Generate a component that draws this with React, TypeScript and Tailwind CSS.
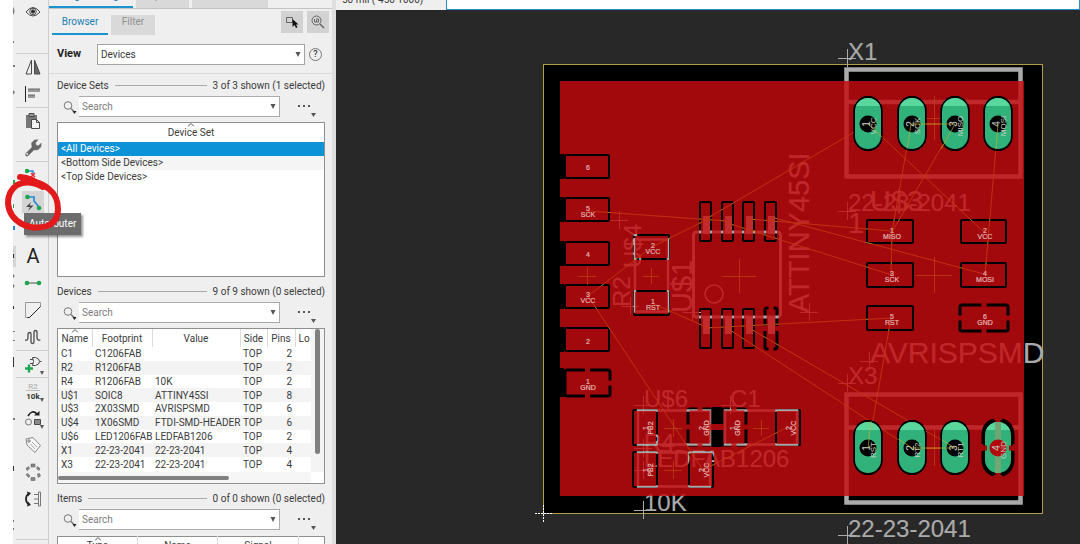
import React from "react";

const ink = "#4a4a4a";

function ToolButton({ label, children, active = false, menu = false }: { label: string; children?: React.ReactNode; active?: boolean; menu?: boolean }) {
  return (
    <button aria-label={label} className="relative flex h-[27px] w-full items-center justify-center pl-0.5">
      <span className={active ? "flex size-[22px] items-center justify-center bg-[#d4d4d4]" : "flex size-[22px] items-center justify-center"}>
        <svg viewBox="0 0 20 20" className="size-5" fill="none" stroke={ink} strokeWidth="1">
          {children}
        </svg>
      </span>
      {menu && (
        <svg viewBox="0 0 4 4" className="absolute right-1 bottom-0.5 size-1">
          <path d="M0 0h4L2 4z" fill="#555" />
        </svg>
      )}
    </button>
  );
}

function ToolGroup({ children }: { children: React.ReactNode }) {
  return <div className="shadow-[inset_0_1px_#cfcfcf]">{children}</div>;
}

function NeighbourColumn() {
  return (
    <svg viewBox="0 0 3 544" preserveAspectRatio="xMinYMin slice" className="h-full w-[3px] shrink-0">
      <g fill="#777">
        <path d="M0 7q3 4 0 8zM0 65h2v2H0zM0 90l2 2-2 3zM0 331h2v1H0zM0 340h2v1H0zM0 418h2v2H0z" />
        <path d="M0 41h1v2H0zM0 274q3 2 0 4zM0 284q3 2 0 4zM0 520h1v2H0zM0 528h1v2H0z" />
      </g>
      <path d="M0 246h3v21H0z" fill="#d4d4d4" />
      <path d="M0 254h1v4H0zM0 306h1v3H0zM0 357h1v10H0zM0 466h1v5H0z" fill="#333" />
      <path d="M0 180h2v4H0zM0 204h1v4H0z" fill="#1ca64c" />
      <path d="M0 226h2v4H0z" fill="#1b87c9" />
    </svg>
  );
}

function Toolbar() {
  return (
    <nav aria-label="Board tools" className="flex w-9 shrink-0 border-r border-[#cdcdcd] bg-[#efefef]">
      <NeighbourColumn />
      <div className="min-w-0 flex-1">
        <div className="h-[53px] pt-px">
          <button aria-label="Show" className="flex h-[22px] w-full items-center justify-center pl-0.5">
            <svg viewBox="0 0 16 14" className="h-3.5 w-4" fill="none" stroke={ink}>
              <path d="M1 7Q8-2 15 7 8 15 1 7z" />
              <circle cx="8" cy="6.500" r="3.300" />
              <circle cx="8" cy="6.500" r="1.700" fill="#222" />
            </svg>
          </button>
        </div>
        <ToolGroup>
          <ToolButton label="Mirror">
            <path d="M8.500 3v14H3z" />
            <path d="M11.500 3v14H17z" fill="#666" />
          </ToolButton>
          <ToolButton label="Align">
            <path d="M2.500 2v16" stroke="#222" />
            <path d="M5 6.500h12M5 12.500h7" stroke="#999" strokeWidth="3" />
            <path d="M5 5h12M5 11h7" stroke="#666" />
          </ToolButton>
        </ToolGroup>
        <ToolGroup>
          <ToolButton label="Paste">
            <path d="M3 4h11v13H3z" fill="#777" stroke="none" />
            <path d="M6 2.500h5v3H6z" fill="#999" />
            <path d="M8.500 8.500h5l3 3v6h-8z" fill="#f4f4f4" />
            <path d="M13.500 8.500v3h3" />
          </ToolButton>
          <ToolButton label="Change">
            <path d="M4 16.500l6.500-6.500" stroke="#666" strokeWidth="3.600" strokeLinecap="round" />
            <path d="M9 9l-.5-4 3-3 3.500-.3-2.500 3 .5 2.500 2.500.5 2.700-2.500-.2 3.500-3 3-4 .3z" fill="#666" stroke="#666" strokeWidth=".5" />
            <circle cx="4.200" cy="16" r=".9" fill="#eee" stroke="none" />
          </ToolButton>
        </ToolGroup>
        <ToolGroup>
          <ToolButton label="Ripup">
            <path d="M4 6h6v4" stroke="#2389d8" strokeWidth="1.500" />
            <circle cx="4" cy="6" r="2.200" fill="#16a84a" stroke="none" />
            <path d="M8 8l4 4m0-4l-4 4" stroke="#e03131" strokeWidth="1.500" />
          </ToolButton>
          <ToolButton label="Autorouter" active>
            <path d="M4 5h7v4l5 6" stroke="#2389d8" strokeWidth="1.700" />
            <circle cx="4.500" cy="5" r="2.300" fill="#16a84a" stroke="none" />
            <circle cx="16" cy="16" r="2.300" fill="#16a84a" stroke="none" />
            <path d="M8 10l-5 5h4l-2 4 5.500-5.500h-4z" fill="#444" stroke="none" />
          </ToolButton>
          <ToolButton label="Polygon">
            <path d="M3.500 7v8.500h15V12" />
          </ToolButton>
          <ToolButton label="Text">
            <text x="10" y="17" textAnchor="middle" fontSize="20" fill="#222" stroke="none" className="font-[Roboto,sans-serif]">A</text>
          </ToolButton>
          <ToolButton label="Signal">
            <path d="M4 10h12" stroke="#555" />
            <circle cx="4" cy="10" r="2.300" fill="#16a84a" stroke="none" />
            <circle cx="16" cy="10" r="2.300" fill="#16a84a" stroke="none" />
          </ToolButton>
          <ToolButton label="Miter">
            <path d="M2.500 17.500v-15h15v4l-11 11z" stroke="#999" />
            <path d="M17.500 6.500l-11 11h-2" stroke="#222" />
          </ToolButton>
          <ToolButton label="Meander">
            <path d="M2 13q3 1 3-3V7q0-1.500 1.500-1.500T8 7v8q0 1.500 1.500 1.500T11 15V5q0-1.500 1.500-1.500T14 5v5q0 4 3.500 3" strokeWidth="1.300" />
          </ToolButton>
        </ToolGroup>
        <ToolGroup>
          <ToolButton label="Add part" menu>
            <path d="M9.500 3.500h3q4 1 4 4t-4 4h-3q2-4 0-8zM7 5.500h3M7 9.500h3M16.500 7.500h2" />
            <path d="M6 10.500v8M2 14.500h8" stroke="#1fa651" strokeWidth="2.400" />
          </ToolButton>
        </ToolGroup>
        <ToolGroup>
          <ToolButton label="Value" menu>
            <text x="10" y="8" textAnchor="middle" fontSize="8" fill="#aaa" stroke="none">R2</text>
            <path d="M3 9.500h14" stroke="#bbb" />
            <text x="10" y="18" textAnchor="middle" fontSize="8" fill="#333" stroke="none" className="font-bold">10k</text>
          </ToolButton>
          <ToolButton label="Replace" menu>
            <path d="M5 8q4-7 9-2" stroke="#222" strokeWidth="1.600" />
            <path d="M11 7.500h5.500V3z" fill="#222" stroke="none" />
            <circle cx="5.500" cy="14" r="3" stroke="#777" />
            <path d="M11.500 11.500h6v5h-6z" fill="#8a8a8a" />
          </ToolButton>
          <ToolButton label="Name">
            <path d="M3 4l7-1.500 7.500 8-5.500 7L4 10z" stroke="#888" fill="#f7f7f7" />
            <circle cx="6" cy="6" r="1.200" stroke="#777" />
            <path d="M9 7l5 5M7.500 9l4.500 5" stroke="#aaa" />
          </ToolButton>
          <ToolButton label="Rotate array">
            <g fill="#888" stroke="#666" strokeWidth=".6">
              <path d="M8 2h4v3H8zM8 15.500h4v3H8zM14.500 4.500l2.500 2-1 2-2.500-2zM14.500 12l2-.5 1 2.500-2.500 1.500zM5.500 4.500l1 2-2.500 2-1-2zM3 12.500l2-1 2 2.500-1.500 1.500z" />
            </g>
          </ToolButton>
          <ToolButton label="Pin swap">
            <path d="M6 5q-3 1-3 5t3 5" stroke="#222" strokeWidth="1.800" />
            <path d="M4 2.500l4 1.500-3 3.500zM4 17.500l4-1.500-3-3.500z" fill="#222" stroke="none" />
            <path d="M15.500 3h2v14h-2zM11 5.500h4M11 10h4M11 14.500h4" stroke="#777" />
          </ToolButton>
          <div className="h-[27px]" />
        </ToolGroup>
        <ToolGroup>
          <div className="h-[27px]" />
        </ToolGroup>
      </div>
    </nav>
  );
}

function Arrow({ className = "" }: { className?: string }) {
  return (
    <svg viewBox="0 0 6 5" className={"h-[5px] w-1.5 " + className}>
      <path d="M.5 0h5L3 5z" fill="#555" />
    </svg>
  );
}

function SectionTitle({ id, title, status }: { id: string; title: string; status: string }) {
  return (
    <div className="flex h-4 items-center gap-1.5">
      <label htmlFor={id}>{title}</label>
      <span className="h-px flex-1 bg-[#a9a9a9]" />
      <span>{status}</span>
    </div>
  );
}

function SearchRow({ id }: { id: string }) {
  return (
    <div className="mt-[3px] flex h-[21px] items-center">
      <button aria-label="Search options" className="flex w-[22px] justify-end pr-0.5">
        <svg viewBox="0 0 14 14" className="size-3.5" fill="none" stroke="#777">
          <circle cx="5" cy="5.500" r="3.800" />
          <path d="M8 8.500l3 3" strokeWidth="1.400" />
          <path d="M9.500 11h4l-2 3z" fill="#222" stroke="none" />
        </svg>
      </button>
      <div className="flex h-full flex-1 items-center border border-l-0 border-[#ababab] bg-white pr-[3px]">
        <input id={id} type="text" placeholder="Search" className="min-w-0 flex-1 bg-transparent pl-[3px] text-[10px] outline-none placeholder:text-[#7d7d7d]" />
        <Arrow />
      </div>
      <button aria-label="More options" className="ml-[18px] flex h-full w-[27px] items-center">
        <svg viewBox="0 0 18 21" className="h-[21px] w-[18px]" fill="#555">
          <path d="M0 9h2v2H0zM5 9h2v2H5zM10 9h2v2h-2zM13 17h5l-2.500 4z" />
        </svg>
      </button>
    </div>
  );
}

function SortMark() {
  return (
    <svg viewBox="0 0 7 4" className="absolute top-0 left-1/2 h-1 w-[7px] -translate-x-1/2" fill="none" stroke="#555">
      <path d="M.5 3.500l3-3 3 3" />
    </svg>
  );
}

const devices: string[][] = [
  ["C1", "C1206FAB", "", "TOP", "2"],
  ["R2", "R1206FAB", "", "TOP", "2"],
  ["R4", "R1206FAB", "10K", "TOP", "2"],
  ["U$1", "SOIC8", "ATTINY45SI", "TOP", "8"],
  ["U$3", "2X03SMD", "AVRISPSMD", "TOP", "6"],
  ["U$4", "1X06SMD", "FTDI-SMD-HEADER", "TOP", "6"],
  ["U$6", "LED1206FAB", "LEDFAB1206", "TOP", "2"],
  ["X1", "22-23-2041", "22-23-2041", "TOP", "4"],
  ["X3", "22-23-2041", "22-23-2041", "TOP", "4"],
];

function DeviceTable() {
  return (
    <div className="mt-[5px] flex h-[156px] flex-col border border-[#8f8f8f] bg-white">
      <div className="flex min-h-0 flex-1">
        <div className="min-w-0 flex-1 overflow-hidden">
          <table className="h-[142px] w-full table-fixed border-collapse text-left whitespace-nowrap">
            <colgroup>
              <col className="w-[34px]" />
              <col className="w-[60px]" />
              <col className="w-[88px]" />
              <col className="w-[27px]" />
              <col className="w-[28px]" />
              <col />
            </colgroup>
            <thead>
              <tr className="h-[18px] text-center">
                <th className="relative border-r border-[#dcdcdc] font-normal">Name<SortMark /></th>
                <th className="border-r border-[#dcdcdc] font-normal">Footprint</th>
                <th className="border-r border-[#dcdcdc] font-normal">Value</th>
                <th className="border-r border-[#dcdcdc] font-normal">Side</th>
                <th className="border-r border-[#dcdcdc] font-normal">Pins</th>
                <th className="pl-[3px] text-left font-normal">Lo</th>
              </tr>
            </thead>
            <tbody className="leading-[13px]">
              {devices.map((d) => (
                <tr key={d[0]} className="even:bg-[#f4f4f4]">
                  <td className="pl-[3px]">{d[0]}</td>
                  <td className="pl-[3px]">{d[1]}</td>
                  <td className="pl-[3px]">{d[2]}</td>
                  <td className="pl-[3px]">{d[3]}</td>
                  <td className="pr-[3px] text-right">{d[4]}</td>
                  <td />
                </tr>
              ))}
            </tbody>
          </table>
        </div>
        <div className="w-[13px] bg-[#f4f4f4] pl-1">
          <div className="h-[125px] w-[5px] rounded-full bg-[#808080]" />
        </div>
      </div>
      <div className="mr-[13px] flex h-[11px] items-center bg-[#f6f6f6]">
        <div className="h-1 w-[171px] rounded-full bg-[#808080]" />
      </div>
    </div>
  );
}

function SidePanel() {
  return (
    <aside className="flex w-[283px] shrink-0 flex-col overflow-hidden bg-[#efefef] text-[10px] text-[#3c3c3c]">
      <div className="flex h-[9px] shrink-0 items-end gap-[3px] overflow-hidden border-b border-[#c4c4c4]">
        <button className="flex h-6 w-[84px] items-start justify-center border-b-2 border-[#1b93cf] pt-1 leading-4 text-[#1b7fb5]">Design Manager</button>
        <button className="flex h-6 w-[53px] items-start justify-center bg-[#d9d9d9] pt-1 leading-4 text-[#888]">Inspector</button>
        <button className="flex h-6 w-[76px] items-start justify-center bg-[#d9d9d9] leading-3 text-[#888]">Selection Filter</button>
      </div>
      <div className="flex h-[26px] shrink-0 items-end gap-[3px] pr-[3px] pl-[3px]">
        <button className="h-6 w-14 border-b-2 border-[#1b93cf] pb-px text-[#1b7fb5]">Browser</button>
        <button className="h-5 w-11 bg-[#d9d9d9] pb-1.5 leading-[14px] text-[#909090]">Filter</button>
        <div className="mb-0.5 ml-auto flex gap-1">
          <button aria-label="Select in board" className="flex size-[22px] items-center justify-center bg-[#d2d2d2]">
            <svg viewBox="0 0 16 16" className="size-4" fill="none">
              <path d="M2.500 3.500h6v5h-6z" stroke="#666" />
              <path d="M8.500 5v8l2-2 1.500 3 1.500-.7-1.500-2.800h2.500z" fill="#111" />
            </svg>
          </button>
          <button aria-label="Zoom to selection" className="flex size-[22px] items-center justify-center bg-[#d2d2d2]">
            <svg viewBox="0 0 16 16" className="size-4" fill="none" stroke="#666">
              <circle cx="6.500" cy="6.500" r="4.500" />
              <path d="M10 10l4 4" strokeWidth="1.600" />
              <path d="M4.500 5v3h1.500m0-3h2.500v3H6.500v-2" />
            </svg>
          </button>
        </div>
      </div>

      <div className="mt-[9px] flex h-[21px] shrink-0 items-center pr-2.5 pl-2">
        <label htmlFor="view" className="w-10 text-[11px] font-bold text-[#222]">View</label>
        <div className="relative h-full flex-1">
          <select id="view" defaultValue="Devices" className="h-full w-full appearance-none border border-[#a3a3a3] bg-white pl-[3px] outline-none">
            <option>Devices</option>
          </select>
          <Arrow className="pointer-events-none absolute top-2 right-1" />
        </div>
        <button aria-label="Help" className="ml-1 flex size-[13px] items-center justify-center rounded-full border border-[#777] text-[9px] leading-none font-medium">?</button>
      </div>

      <div className="mt-2 flex flex-col border-t border-[#d9d9d9] pt-[3px] pr-[7px] pl-2">
        <section>
          <SectionTitle id="search-sets" title="Device Sets" status="3 of 3 shown (1 selected)" />
          <SearchRow id="search-sets" />
          <div className="mt-[5px] h-[155px] border border-[#8f8f8f] bg-white">
            <div className="relative h-[19px] pt-0.5 text-center leading-4">
              Device Set
              <SortMark />
            </div>
            <ul className="leading-[14px]">
              <li className="h-3.5 bg-[#0c92d6] pl-[3px] text-white">&lt;All Devices&gt;</li>
              <li className="h-3.5 bg-[#f5f5f5] pl-[3px]">&lt;Bottom Side Devices&gt;</li>
              <li className="h-3.5 pl-[3px]">&lt;Top Side Devices&gt;</li>
            </ul>
          </div>
        </section>
        <section className="mt-1.5">
          <SectionTitle id="search-devices" title="Devices" status="9 of 9 shown (0 selected)" />
          <SearchRow id="search-devices" />
          <DeviceTable />
        </section>
        <section className="mt-1.5">
          <SectionTitle id="search-items" title="Items" status="0 of 0 shown (0 selected)" />
          <SearchRow id="search-items" />
          <table className="mt-1.5 w-full table-fixed border border-[#8f8f8f] bg-white">
            <thead>
              <tr className="h-[18px]">
                <th className="relative w-[80px] border-r border-[#dcdcdc] pt-px leading-4 font-normal">Type<SortMark /></th>
                <th className="w-[80px] border-r border-[#dcdcdc] pt-px leading-4 font-normal">Name</th>
                <th className="w-[81px] border-r border-[#dcdcdc] pt-px leading-4 font-normal">Signal</th>
                <th />
              </tr>
            </thead>
            <tbody><tr><td className="h-10" /></tr></tbody>
          </table>
        </section>
      </div>
    </aside>
  );
}

type Box = [number, number, number, number];

const gaps: Box[] = [
  [565, 155, 44, 23], [565, 198, 44, 23], [565, 242, 44, 23], [565, 285, 44, 23], [565, 328, 44, 23],
  [634, 235, 35, 24], [634, 291, 35, 24],
  [700, 202, 11, 39], [722, 202, 11, 39], [743, 202, 11, 39], [765, 202, 11, 39],
  [700, 309, 11, 39], [722, 309, 11, 39], [743, 309, 11, 39],
  [867, 220, 46, 23], [961, 220, 45, 23], [867, 263, 46, 24], [961, 263, 45, 24], [867, 306, 46, 24],
  [633, 410, 24, 35], [776, 410, 24, 35], [633, 452, 24, 35], [689, 452, 24, 35],
];

const thermals: Box[] = [
  [565, 370, 45, 26], [765, 308, 12, 41], [960, 305, 48, 26], [688, 409, 24, 36], [722, 409, 24, 36],
];

const airwires: Box[] = [
  [868, 124, 706, 219], [706, 220, 652, 247], [868, 124, 985, 233], [911, 124, 892, 232], [911, 124, 955, 124],
  [955, 124, 892, 232], [998, 124, 985, 275], [892, 232, 891, 275], [588, 211, 727, 221], [749, 219, 892, 231],
  [771, 217, 984, 274], [727, 223, 892, 275], [588, 296, 652, 247], [588, 296, 703, 470], [652, 303, 706, 327],
  [706, 328, 891, 318], [727, 328, 911, 448], [749, 328, 955, 448], [891, 318, 868, 448], [911, 448, 955, 448],
  [788, 427, 703, 470],
];

const marks: [number, number, number][] = [
  [847, 58, 9], [643, 510, 9], [847, 535, 9], [847, 211, 9], [869, 361, 9], [847, 383, 9], [643, 405, 9],
  [730, 405, 9], [643, 448, 9], [643, 470, 9], [619, 220, 9], [630, 306, 9], [692, 312, 9], [809, 312, 9],
];

const centres: [number, number, number][] = [
  [739, 276, 17], [651, 276, 8], [587, 276, 9], [934, 275, 18], [673, 428, 9], [761, 428, 8], [673, 470, 9], [934, 118, 22], [934, 448, 18],
];

const labels: [number, number, string, string][] = [
  [588, 167, "6", ""], [588, 211, "5", "SCK"], [588, 254, "4", ""], [588, 297, "3", "VCC"], [588, 341, "2", ""], [588, 384, "1", "GND"],
  [653, 248, "2", "VCC"], [653, 304, "1", "RST"],
  [892, 233, "1", "MISO"], [985, 233, "2", "VCC"], [892, 276, "3", "SCK"], [985, 276, "4", "MOSI"], [892, 319, "5", "RST"], [985, 319, "6", "GND"],
];

const turned: [number, number, string, string][] = [
  [648, 428, "1", "PB2"], [648, 470, "1", "PB2"], [704, 428, "2", "GND"], [704, 470, "2", "VCC"], [735, 428, "1", "GND"], [791, 428, "2", "VCC"],
];

const pins: [number, number, string, string][] = [
  [868, 124, "1", "VCC"], [912, 124, "2", "SCK"], [955, 124, "3", "MISO"], [998, 124, "4", "MOSI"],
  [868, 448, "1", "RST"], [912, 448, "2", "RT2"], [955, 448, "3", "RT1"], [998, 448, "4", "GND"],
];

function Cross({ x, y, r }: { x: number; y: number; r: number }) {
  return <path d={`M${x - r} ${y + 0.5}h${2 * r}M${x + 0.5} ${y - r}v${2 * r}`} />;
}

function Board() {
  return (
    <svg viewBox="336 10 744 534" role="img" aria-label="Circuit board layout" className="h-full w-full font-['Liberation_Sans',Arial,sans-serif]">
      <defs>
        <mask id="copper" maskUnits="userSpaceOnUse" x="540" y="60" width="510" height="460">
          <rect x="560" y="81" width="464" height="415" fill="white" />
          <g fill="none" stroke="black" strokeWidth="2">
            {gaps.map(([x, y, w, h], i) => <rect key={i} x={x} y={y} width={w} height={h} rx="1" />)}
          </g>
          <g fill="none" stroke="black" strokeWidth="3">
            {thermals.map(([x, y, w, h], i) => <rect key={i} x={x} y={y} width={w} height={h} rx="2" />)}
          </g>
          {[154, 197, 241, 284, 327, 368].map((y) => <rect key={y} x="559" y={y} width="5" height={y === 368 ? 29 : 25} fill="black" />)}
          <rect x="712" y="407" width="10" height="40" fill="black" />
          <g fill="white">
            {thermals.map(([x, y, w, h], i) => (
              <g key={i}>
                <rect x={x + w / 2 - 2.5} y={y - 2} width="5" height={h + 4} />
                <rect x={x + (i === 0 ? 10 : -2)} y={y + h / 2 - 2.5} width={w + (i === 0 ? -8 : 4)} height="5" />
              </g>
            ))}
            <rect x="710" y="424" width="14" height="6" />
          </g>
          <g fill="black">
            {pins.map(([x, y], i) => <rect key={i} x={x - 14.5} y={y - 28} width="29" height="55" rx="14.500" />)}
          </g>
        </mask>
      </defs>

      <rect x="543.500" y="64.500" width="499" height="449" fill="black" stroke="#b39b4a" />

      <g fill="none" stroke="#aaaaaa">
        <g strokeWidth="4.500">
          <path d="M846.500 69.500h174v107h-174zM846.500 102h174" />
          <path d="M846.500 394.500h174v108h-174zM846.500 427.500h174" />
        </g>
        <rect x="693.500" y="232" width="87" height="85" rx="3" strokeWidth="3" />
        <circle cx="714" cy="294" r="9" strokeWidth="1.500" />
        <path d="M635 239.500h33v72h-33zM638 410.500h72v34h-72zM725 410.500h72v34h-72zM638 452.500h72v34h-72z" strokeWidth="2.500" />
        <g strokeWidth="1">
          {marks.map(([x, y, r], i) => <Cross key={i} x={x} y={y} r={r} />)}
        </g>
      </g>
      <g fill="#aaaaaa" stroke="#aaaaaa" strokeWidth=".15" fontSize="24">
        <text x="848" y="60">X1</text>
        <text x="848" y="211">22-23-2041</text>
        <text x="848" y="384">X3</text>
        <text x="848" y="537">22-23-2041</text>
        <text x="644" y="407">U$6</text>
        <text x="730" y="407">C1</text>
        <text x="644" y="451">R4</text>
        <text x="644" y="467">LEDFAB1206</text>
        <text x="644" y="511">10K</text>
        <text transform="translate(641 268) rotate(-90)">U$4</text>
        <text transform="translate(630 307) rotate(-90)">R2</text>
      </g>
      <g fill="#aaaaaa" stroke="#aaaaaa" strokeWidth=".15" fontSize="29">
        <text x="870" y="211">U$3</text>
        <text x="848" y="233">1</text>
        <text x="870" y="363" fontSize="30">AVRISPSMD</text>
        <text transform="translate(809 313) rotate(-90)">ATTINY45SI</text>
        <text transform="translate(692 313) rotate(-90)">U$1</text>
      </g>
      <g fill="#b8b8b8">
        {[703, 725, 746, 768].map((x) => (
          <g key={x}>
            <rect x={x} y="216" width="7" height="18" />
            <rect x={x} y="317" width="7" height="17" />
          </g>
        ))}
      </g>
      <g stroke="#c9b02c" strokeWidth=".8">
        {airwires.map(([a, b, c, d], i) => <line key={i} x1={a} y1={b} x2={c} y2={d} />)}
      </g>

      <rect x="560" y="81" width="464" height="415" fill="#c50b0f" fillOpacity=".824" mask="url(#copper)" />

      <g stroke="#bf3d12" strokeOpacity=".8" fill="none">
        {centres.map(([x, y, r], i) => <Cross key={i} x={x} y={y} r={r} />)}
      </g>
      <g stroke="#c04a10" strokeOpacity=".4" strokeWidth=".8">
        {airwires.map(([a, b, c, d], i) => <line key={i} x1={a} y1={b} x2={c} y2={d} />)}
      </g>

      {pins.map(([x, y, n, name], i) => (
        <g key={i}>
          <rect x={x - 14.5} y={y - 28} width="29" height="55" rx="14.500" fill="black" />
          <rect x={x - 13} y={y - 26} width="26" height="51" rx="13" fill="#31b27a" />
          <path d={`M${x - 12} ${y - 18}Q${x - 8} ${y - 26} ${x} ${y - 26}T${x + 12} ${y - 18}z`} fill="#5ad79c" />
          {i === 7 && (
            <g>
              <path d={`M${x - 16} ${y}h5M${x + 11} ${y}h5M${x} ${y - 29}v4M${x} ${y + 25}v4`} stroke="#a2090c" strokeWidth="5" />
              <path d={`M${x} ${y - 26}v51`} stroke="#6fa876" strokeWidth="6" />
              <path d={`M${x - 15} ${y - 4}v-8q0-13 11-16M${x + 15} ${y - 4}v-8q0-13-11-16M${x - 15} ${y + 3}v8q0 13 11 16M${x + 15} ${y + 3}v8q0 13-11 16`} fill="none" stroke="black" strokeWidth="3" />
            </g>
          )}
          <circle cx={x} cy={y} r="8.500" fill={i === 7 ? "#b3090d" : "black"} />
          <g fill="#c8d0c8" textAnchor="middle">
            <text fontSize="10" transform={`translate(${x + 2} ${y}) rotate(-90)`}>{n}</text>
            <text fontSize="8" transform={`translate(${x + 8} ${y + 2}) rotate(-90)`}>{name}</text>
          </g>
        </g>
      ))}
      <g stroke="#c9b02c" strokeOpacity=".8" strokeWidth=".8">
        <path d="M912 124h43M912 448h43M868 124l14 13M911 124l-4 25M955 124l-14 25M998 124l-2 25M868 448l3-27M912 448l-14-9M955 448l-13-8" />
      </g>

      <g fill="#e2b4b5" stroke="#e2b4b5" strokeWidth=".2" fontSize="7" textAnchor="middle">
        {labels.map(([x, y, n, name], i) => (
          <g key={i}>
            <text x={x} y={name ? y : y + 3}>{n}</text>
            {name && <text x={x} y={y + 6}>{name}</text>}
          </g>
        ))}
        {turned.map(([x, y, n, name], i) => (
          <g key={i}>
            <text transform={`translate(${x} ${y}) rotate(-90)`}>{n}</text>
            <text transform={`translate(${x + 5} ${y}) rotate(-90)`}>{name}</text>
          </g>
        ))}
      </g>
      <path d="M535 513.500h17M543.500 505v17" stroke="white" strokeDasharray="2 1" />
    </svg>
  );
}

function Tooltip() {
  return (
    <div className="pointer-events-none absolute top-[174px] left-0">
      <div role="tooltip" className="absolute top-[39px] left-6 bg-[#6c6c6c] px-[5px] py-[3px] text-[10px] leading-4 text-white shadow-[2px_2px_2px_rgba(0,0,0,0.4)]">Autorouter</div>
      <svg viewBox="0 0 64 64" className="absolute top-0 left-0 size-16" fill="none" stroke="#e21a1c" strokeWidth="6" strokeLinecap="round" strokeLinejoin="round">
        <path d="M20 3q13 1 23 10Q28 5 17 11 8 17 8 29q1 14 14 21 12 6 25 2 11-4 11-17 0-13-9-20-6-5-14-7" />
      </svg>
    </div>
  );
}

export default function App() {
  return (
    <div className="relative flex h-screen overflow-hidden bg-white pl-[13px] font-[Roboto,'Noto_Sans',sans-serif]">
      <Toolbar />
      <SidePanel />
      <div className="w-1 shrink-0 bg-[#dedede]" />
      <main className="flex min-w-0 flex-1 flex-col bg-[#282828]">
        <header className="flex h-2.5 shrink-0 items-end overflow-hidden bg-[#efefef]">
          <span className="w-[110px] self-start pl-1.5 text-[10px] leading-4 text-[#3c3c3c]"><span className="-mt-2 block">50 mil (-450 1000)</span></span>
          <input aria-label="Command line" className="h-5 min-w-0 flex-1 border border-[#1b93cf] bg-white px-1 text-[10px] outline-none" />
        </header>
        <div className="min-h-0 flex-1">
          <Board />
        </div>
      </main>
      <Tooltip />
    </div>
  );
}
